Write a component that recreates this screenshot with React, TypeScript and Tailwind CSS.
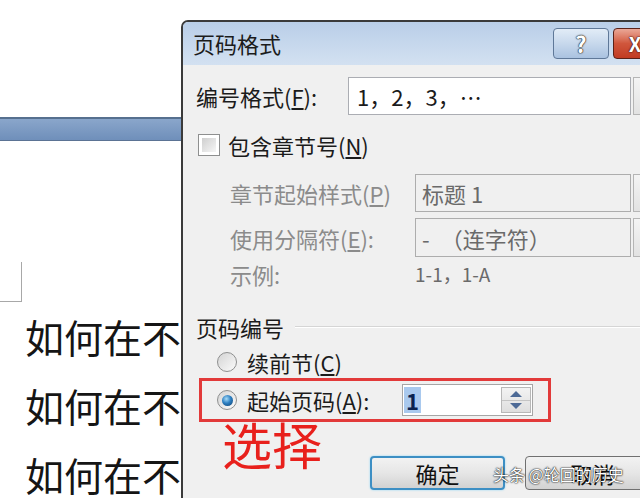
import React from 'react';

const Radio = ({ checked }: { checked?: boolean }) => (
  <div className="w-[20px] h-[20px] rounded-full border border-[#8e8f8f] bg-linear-to-br from-[#d4d4d4] to-[#fbfbfb] flex items-center justify-center shrink-0">
    {checked && (
      <div className="w-[11px] h-[11px] rounded-full bg-[radial-gradient(circle_at_40%_35%,#a8dcf8,#2c7fc2_45%,#0e3c6a)]" />
    )}
  </div>
);

const DropButton = ({ h }: { h: string }) => (
  <div className={`ml-[2px] w-[26px] ${h} border border-[#b5b5b5] bg-linear-to-b from-[#f4f4f4] to-[#e2e2e2]`} />
);

const DialogButton = ({ label, focused }: { label: string; focused?: boolean }) => (
  <div
    className={
      focused
        ? 'w-[135px] h-[34px] rounded-[4px] border-2 border-[#3d8fc4] shadow-[0_0_2px_#7fd0f5] bg-linear-to-b from-[#f2f2f2] via-[#e6e6e6] to-[#d2d2d2] flex items-center justify-center text-[22px] text-[#111]'
        : 'w-[135px] h-[34px] rounded-[4px] border border-[#707070] bg-linear-to-b from-[#f2f2f2] via-[#e6e6e6] to-[#d2d2d2] flex items-center justify-center text-[22px] text-[#111]'
    }
  >
    {label}
  </div>
);

function TitleBar() {
  return (
    <div className="h-[43px] flex items-center pl-[10px] bg-linear-to-b from-[#b9cee8] to-[#d3e1f1]">
      <span className="w-[360px] text-[22px] text-[#1b1b1b]">页码格式</span>
      <div className="w-[56px] h-[31px] rounded-[4px] border border-[#5f7898] bg-linear-to-b from-[#e2ecf7] via-[#c7d8ec] to-[#aac2e0] flex items-center justify-center text-[22px] font-bold text-white [text-shadow:0_0_1px_#222,0_0_1px_#222,0_0_2px_#333]">
        ?
      </div>
      <div className="ml-[4px] w-[44px] h-[31px] rounded-[4px] border border-[#5a2118] bg-linear-to-b from-[#eaa797] via-[#d0563c] to-[#c13a22] flex items-center justify-center text-[20px] font-bold text-white [text-shadow:0_0_1px_#300,0_0_2px_#300]">
        X
      </div>
    </div>
  );
}

function Body() {
  return (
    <div className="flex flex-col pl-[13px] text-[22px] leading-[26px] text-[#1b1b1b]">
      {/* 编号格式 */}
      <div className="mt-[12px] flex items-center h-[38px]">
        <span className="w-[152px]">编号格式(<u>F</u>):</span>
        <div className="w-[283px] h-[38px] border border-[#abadb3] bg-white flex items-center pl-[8px]">1，2，3，…</div>
        <DropButton h="h-[38px]" />
      </div>

      {/* 包含章节号 */}
      <div className="mt-[18px] flex items-center h-[24px]">
        <div className="ml-[2px] w-[22px] h-[22px] border border-[#8e8f8f] bg-white p-[3px]">
          <div className="w-full h-full bg-linear-to-br from-[#cfcfcf] to-[#f6f6f6]" />
        </div>
        <span className="ml-[8px]">包含章节号(<u>N</u>)</span>
      </div>

      <div className="pl-[34px] text-[#8b8b8b]">
        <div className="mt-[17px] flex items-center h-[38px]">
          <span className="w-[185px]">章节起始样式(<u>P</u>)</span>
          <div className="w-[216px] h-[38px] border border-[#adadad] bg-[#f0f0f0] flex items-center pl-[6px] text-[#6a6a6a]">标题 1</div>
          <DropButton h="h-[38px]" />
        </div>
        <div className="mt-[6px] flex items-center h-[39px]">
          <span className="w-[185px]">使用分隔符(<u>E</u>):</span>
          <div className="w-[216px] h-[39px] border border-[#adadad] bg-[#f0f0f0] flex items-center pl-[6px] text-[#6a6a6a]">-　（连字符）</div>
          <DropButton h="h-[39px]" />
        </div>
        <div className="mt-[5px] flex items-center h-[24px]">
          <span className="w-[185px]">示例:</span>
          <span className="text-[19px] text-[#6a6a6a]">1-1，1-A</span>
        </div>
      </div>

      {/* 页码编号 */}
      <div className="mt-[29px] flex items-center h-[24px]">
        <span>页码编号</span>
        <div className="ml-[11px] flex-1 border-t border-[#d5d5d5] border-b border-b-white" />
      </div>

      <div className="mt-[11px] flex items-center h-[24px] pl-[21px]">
        <Radio />
        <span className="ml-[10px]">续前节(<u>C</u>)</span>
      </div>

      <div className="mt-[4px] ml-[3px] w-[352px] h-[44px] border-[3px] border-[#e23a3a] flex items-center pl-[15px]">
        <Radio checked />
        <span className="ml-[10px] w-[155px]">起始页码(<u>A</u>):</span>
        <div className="w-[131px] h-[32px] border border-[#a6a6a6] bg-white flex items-center justify-between pl-[1px] pr-[1px]">
          <span className="bg-[#a9c9ee] text-[#0b2350] px-[2px] leading-[26px] font-bold">1</span>
          <div className="w-[30px] h-[26px] flex flex-col border border-[#b8b8b8] bg-linear-to-b from-[#f3f3f3] to-[#dedede]">
            <div className="flex-1 flex items-center justify-center border-b border-[#c4c4c4]">
              <div className="w-0 h-0 border-l-[6px] border-r-[6px] border-b-[6px] border-l-transparent border-r-transparent border-b-[#4d6a96]" />
            </div>
            <div className="flex-1 flex items-center justify-center">
              <div className="w-0 h-0 border-l-[6px] border-r-[6px] border-t-[6px] border-l-transparent border-r-transparent border-t-[#4d6a96]" />
            </div>
          </div>
        </div>
      </div>

      <div className="flex items-start">
        <div className="ml-[26px] w-[148px] mt-[-8px] text-[50px] leading-[58px] text-[#e8201c]">选择</div>
        <div className="mt-[34px] flex gap-[20px]">
          <DialogButton label="确定" focused />
          <DialogButton label="取消" />
        </div>
      </div>
    </div>
  );
}

function Dialog() {
  return (
    <div className="absolute left-[181px] top-[20px] w-[490px] h-[490px] border-l-2 border-t-2 border-[#3a3a3a] rounded-tl-[7px] bg-[#f0f0f0] overflow-hidden">
      <TitleBar />
      <Body />
    </div>
  );
}

function Doc() {
  return (
    <div className="flex flex-col">
      <div className="mt-[117px] h-[24px] border-t-2 border-t-[#56708f] border-b border-b-[#5b7394] bg-linear-to-b from-[#8aa6cb] to-[#6f8fba]" />
      <div className="mt-[121px] w-[22px] h-[40px] border-r border-b border-[#a8a8a8]" />
      <div className="pl-[25px] text-[39px] leading-[69px] text-[#151515] whitespace-nowrap">
        <div>如何在不</div>
        <div>如何在不</div>
        <div>如何在不</div>
      </div>
    </div>
  );
}

export default function App() {
  return (
    <div className="relative w-[640px] h-[498px] overflow-hidden bg-white font-['Noto_Sans_CJK_SC','Noto_Sans',sans-serif]">
      <Doc />
      <Dialog />
      <div className="absolute left-[493px] top-[462px] text-[16px] text-white [text-shadow:0_0_2px_#000,0_0_1px_#000]">
        头条 @轮回的历史
      </div>
    </div>
  );
}
